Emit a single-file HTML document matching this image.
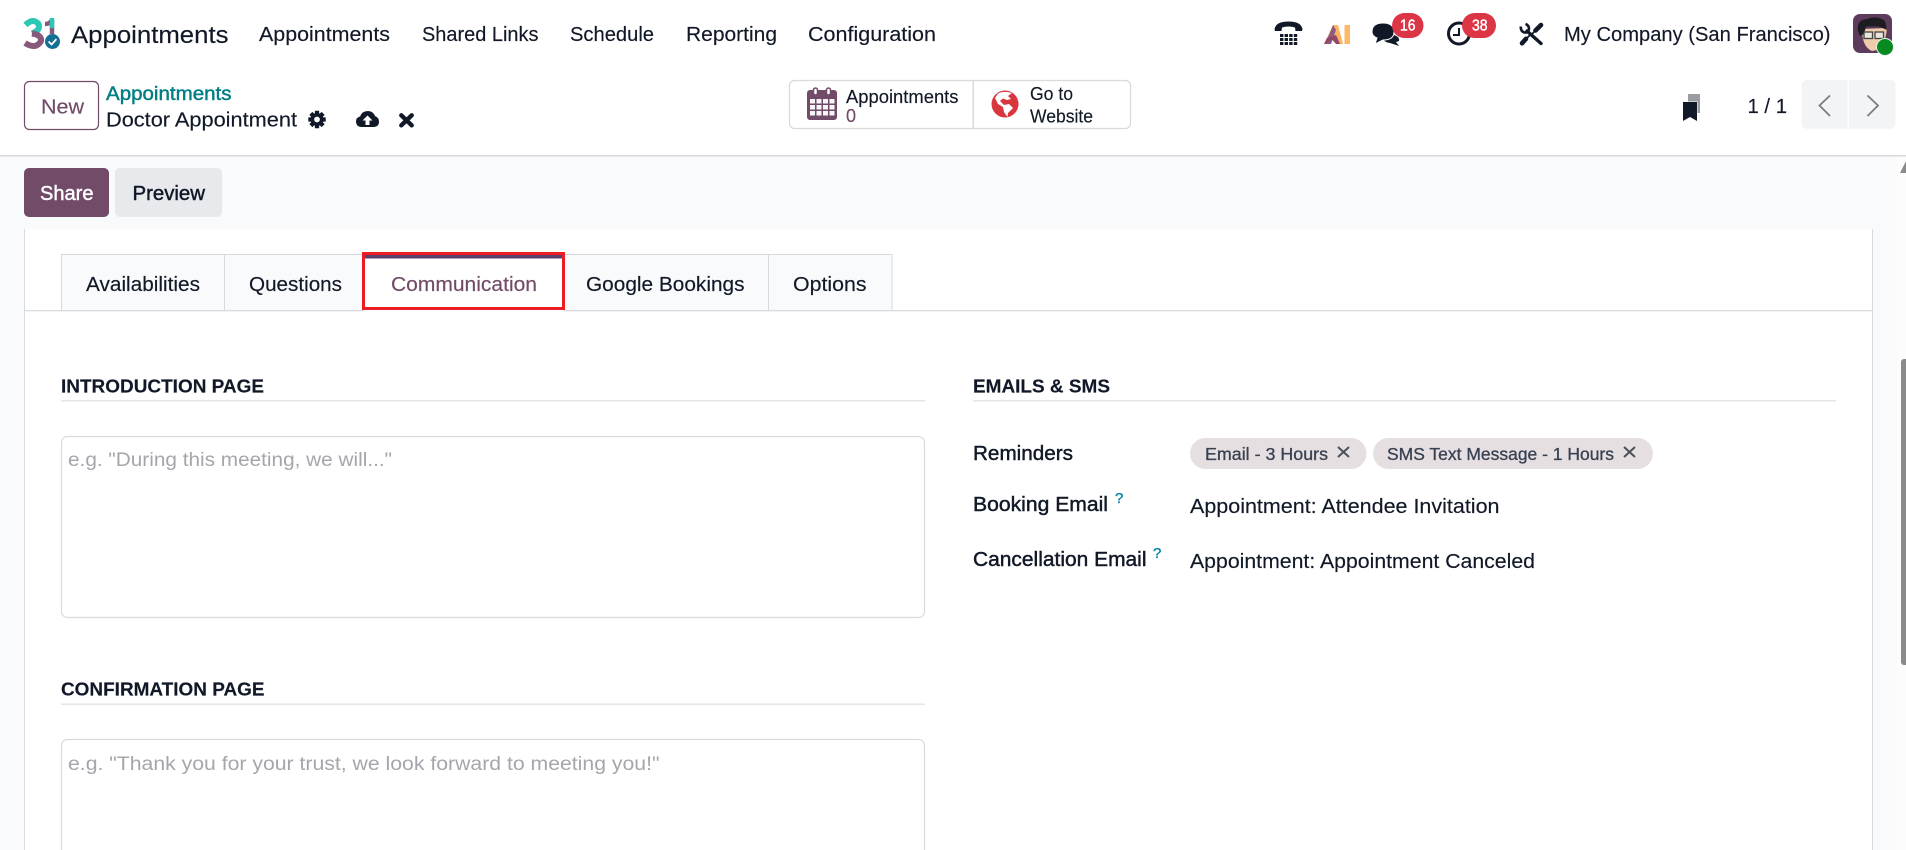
<!DOCTYPE html>
<html lang="en">
<head>
<meta charset="utf-8">
<title>Appointments - Doctor Appointment</title>
<style>
html,body{margin:0;padding:0;width:1906px;height:850px;overflow:hidden;background:#f9fafb}
svg{display:block;position:absolute;left:0;top:0;overflow:hidden}
text{font-family:"Liberation Sans",Arial,sans-serif;fill:#111827;white-space:pre;stroke:#111827;stroke-width:.15px}
.s{stroke:currentColor;stroke-width:.45px}
</style>
</head>
<body>
<svg width="1906" height="850" viewBox="0 0 1906 850" xmlns="http://www.w3.org/2000/svg">
<!-- backgrounds -->
<rect width="1906" height="850" fill="#f9fafb"/>
<rect x="0" y="0" width="1906" height="155" fill="#fff"/>
<rect x="0" y="155" width="1906" height="1.5" fill="#d8dadd"/>
<rect x="1897" y="157" width="9" height="693" fill="#fcfcfd"/>
<polygon points="1900,173 1906,161 1906,173" fill="#8a8a8a"/>
<path d="M1906 359H1904a3 3 0 0 0-3 3V662a3 3 0 0 0 3 3H1906Z" fill="#8a8a8a"/>

<!-- logo -->
<g fill="none" stroke-width="6">
<path d="M25.5 25Q33 17.5 38.5 24Q41 30 32 33.5" stroke="#2cc7b5"/>
<path d="M32 33.5Q42 35 41 41Q36 50 25 43" stroke="#875a7b"/>
<path d="M45 24Q50 24 52 20V34" stroke="#875a7b" stroke-width="4.5"/>
<path d="M52 18V28" stroke="#2cc7b5" stroke-width="4.5"/>
</g>
<circle cx="52.5" cy="41.5" r="7.5" fill="#136f96"/>
<path d="M48.6 41.5l3 3 4.8-5.4" fill="none" stroke="#fff" stroke-width="1.8"/>

<text x="71" y="43" font-size="24" textLength="157.5" lengthAdjust="spacingAndGlyphs">Appointments</text>
<g font-size="20">
<text x="259" y="41" textLength="131" lengthAdjust="spacingAndGlyphs">Appointments</text>
<text x="422" y="41" textLength="116.5" lengthAdjust="spacingAndGlyphs">Shared Links</text>
<text x="570" y="41" textLength="84" lengthAdjust="spacingAndGlyphs">Schedule</text>
<text x="686" y="41" textLength="91" lengthAdjust="spacingAndGlyphs">Reporting</text>
<text x="808" y="41" textLength="128" lengthAdjust="spacingAndGlyphs">Configuration</text>
<text x="1564" y="41" textLength="266.5" lengthAdjust="spacingAndGlyphs">My Company (San Francisco)</text>
</g>

<!-- phone -->
<path d="M1274.5 29Q1276 21.5 1288.5 21.5Q1301 21.5 1302.5 29L1302 31H1295.5L1295 27.5Q1288.5 25.5 1282 27.5L1281.5 31H1275Z" fill="#111827"/>
<g fill="#111827">
<rect x="1280" y="34" width="3.4" height="3"/><rect x="1284.6" y="34" width="3.4" height="3"/><rect x="1289.2" y="34" width="3.4" height="3"/><rect x="1293.8" y="34" width="3.4" height="3"/>
<rect x="1280" y="38" width="3.4" height="3"/><rect x="1284.6" y="38" width="3.4" height="3"/><rect x="1289.2" y="38" width="3.4" height="3"/><rect x="1293.8" y="38" width="3.4" height="3"/>
<rect x="1280" y="42" width="3.4" height="3"/><rect x="1284.6" y="42" width="3.4" height="3"/><rect x="1289.2" y="42" width="3.4" height="3"/><rect x="1293.8" y="42" width="3.4" height="3"/>
</g>
<!-- AI -->
<polygon points="1333,25 1338,25 1343,44 1337,44 1334,35 1330,44 1324,44" fill="#fdb45f"/>
<polygon points="1329,35 1333,25 1336,30 1331,44 1324,44" fill="#8c5a82"/>
<polygon points="1327,38 1336,35 1340,44 1336,44 1332,39.500 1326,44 1324,44" fill="#91476a"/>
<rect x="1344.5" y="25" width="5.5" height="19" fill="#fdb968"/>
<!-- chat -->
<path d="M1385 35H1394Q1400 37 1399 41L1396 42L1399 46L1390 43Q1381 42 1385 35Z" fill="#111827"/>
<path d="M1372 32Q1372 23 1383 23Q1394 23 1394 32Q1394 40 1383 40L1375 44L1377 38Q1372 36 1372 32Z" fill="#111827" stroke="#fff" stroke-width="1"/>
<rect x="1392" y="13" width="31.5" height="25" rx="12.5" fill="#dc3545"/>
<text x="1400" y="30.5" font-size="15.5" class="s" style="fill:#fff;color:#fff" textLength="15.5" lengthAdjust="spacingAndGlyphs">16</text>
<!-- clock -->
<circle cx="1459" cy="33.5" r="10.5" fill="none" stroke="#111827" stroke-width="3"/>
<path d="M1459 28V35H1453" fill="none" stroke="#111827" stroke-width="2"/>
<rect x="1462" y="13" width="34" height="25" rx="12.5" fill="#dc3545"/>
<text x="1472" y="30.5" font-size="15.5" class="s" style="fill:#fff;color:#fff" textLength="15.5" lengthAdjust="spacingAndGlyphs">38</text>
<!-- tools: wrench and screwdriver -->
<g stroke="#111827" fill="none">
<path d="M1527 31L1541 43.500" stroke-width="3.400" stroke-linecap="round"/>
<path d="M1520.800 26.500Q1520.500 31.500 1524.500 32.500Q1528.500 33 1529 28.500Q1528.800 25.200 1525.500 24" stroke-width="2.600"/>
<path d="M1535.500 30.500L1541 25" stroke-width="4.600" stroke-linecap="round"/>
<path d="M1532 34L1535 31" stroke-width="1.800"/>
<path d="M1522 43.300L1526 38.800" stroke-width="4.600" stroke-linecap="round"/>
<path d="M1526 39L1530.500 34.500" stroke-width="1.800"/>
</g>
<!-- avatar -->
<rect x="1853" y="14" width="39" height="39" rx="7" fill="#5d3b5c"/>
<path d="M1862 29Q1862 47 1872 51Q1885 50 1887 28Z" fill="#f0cba9"/>
<path d="M1858 31Q1856 20 1867 19Q1877 15 1885 21L1887 30L1879 26.500H1866L1864 34L1860 36Z" fill="#1d1c22"/>
<g fill="#e8e6df" stroke="#444" stroke-width="1.300"><rect x="1864" y="32" width="8.500" height="6.500"/><rect x="1875" y="32" width="8.500" height="6.500"/></g>
<circle cx="1885" cy="47" r="8.500" fill="#078a1f" stroke="#e9f4ee" stroke-width="1"/>

<!-- control panel -->
<rect x="24.500" y="81.500" width="74" height="48" rx="5" fill="#fff" stroke="#714b67" stroke-width="1.200"/>
<text x="41" y="113.500" font-size="20" style="fill:#714b67;stroke:#714b67" textLength="43" lengthAdjust="spacingAndGlyphs">New</text>
<text x="106" y="100" font-size="19" class="s" style="fill:#017e84;color:#017e84" textLength="125.500" lengthAdjust="spacingAndGlyphs">Appointments</text>
<text x="106" y="126.500" font-size="20.500" textLength="191" lengthAdjust="spacingAndGlyphs">Doctor Appointment</text>

<!-- gear -->
<g stroke="#111827" stroke-width="4.300">
<path d="M317 110.800V128.200M308.300 119.500H325.700M310.850 113.350L323.150 125.650M323.150 113.350L310.850 125.650"/>
</g>
<circle cx="317" cy="119.500" r="6.500" fill="#111827"/><circle cx="317" cy="119.500" r="2.900" fill="#fff"/>
<!-- cloud -->
<path d="M361 127Q356 126.500 356 121.500Q356 117.500 360 116.500Q362 111 368 111Q373 111 375 116Q379 117.500 379 122Q379 126.500 374 127Z" fill="#111827"/>
<path d="M367.500 115.500L372.500 120.500H369.500V125H365.500V120.500H362.500Z" fill="#fff"/>
<!-- x -->
<path d="M401.300 115.300L411.700 125.300M411.700 115.300L401.300 125.300" stroke="#111827" stroke-width="4.400" stroke-linecap="round"/>

<!-- stat buttons -->
<rect x="789.500" y="80.500" width="341" height="48" rx="5" fill="#fff" stroke="#d8dadd" stroke-width="1.300"/>
<rect x="972.500" y="81" width="1.500" height="47" fill="#d8dadd"/>
<rect x="807" y="90" width="30" height="30" rx="3" fill="#714b67"/>
<g fill="#fff" opacity=".95">
<rect x="810" y="99" width="5" height="4.500"/><rect x="816.500" y="99" width="5" height="4.500"/><rect x="823" y="99" width="5" height="4.500"/><rect x="829.500" y="99" width="5" height="4.500"/>
<rect x="810" y="105" width="5" height="4.500"/><rect x="816.500" y="105" width="5" height="4.500"/><rect x="823" y="105" width="5" height="4.500"/><rect x="829.500" y="105" width="5" height="4.500"/>
<rect x="810" y="111" width="5" height="4.500"/><rect x="816.500" y="111" width="5" height="4.500"/><rect x="823" y="111" width="5" height="4.500"/><rect x="829.500" y="111" width="5" height="4.500"/>
</g>
<g fill="#fff" stroke="#714b67" stroke-width="1.500"><rect x="813.500" y="88" width="4" height="7" rx="2"/><rect x="826.500" y="88" width="4" height="7" rx="2"/></g>
<text x="846" y="103" font-size="18" textLength="112.500" lengthAdjust="spacingAndGlyphs">Appointments</text>
<text x="846" y="122" font-size="18" style="fill:#714b67;stroke:#714b67">0</text>
<circle cx="1005" cy="104" r="13.500" fill="#d9363e"/>
<path d="M998 93.500Q1004 90.500 1012 93L1008 96L1011 99L1007 100L1003 98.500L1000 101L1004 105L1009 104L1013 108L1008 113L1007.500 117L1004 112L1003 107L998 104L995 98Z" fill="#fff"/>
<text x="1030" y="100" font-size="18" textLength="43" lengthAdjust="spacingAndGlyphs">Go to</text>
<text x="1030" y="122.500" font-size="18" textLength="63" lengthAdjust="spacingAndGlyphs">Website</text>

<!-- pager -->
<rect x="1688" y="94" width="12" height="19" fill="#9a9ca0"/>
<path d="M1683 102H1697V121L1690 117L1683 121Z" fill="#111827" stroke="#fff" stroke-width="1" paint-order="stroke"/>
<text x="1747.500" y="113" font-size="20" textLength="39.500" lengthAdjust="spacingAndGlyphs">1 / 1</text>
<path d="M1801.600 85a5 5 0 0 1 5-5H1847.500V128.700H1806.600a5 5 0 0 1-5-5Z" fill="#f3f4f6"/>
<path d="M1849 80H1890.500a5 5 0 0 1 5 5V123.700a5 5 0 0 1-5 5H1849Z" fill="#f3f4f6"/>
<path d="M1830 95.500L1819.500 105.500L1830 116" fill="none" stroke="#797c82" stroke-width="1.800"/>
<path d="M1867.500 95.500L1878 105.500L1867.500 116" fill="none" stroke="#797c82" stroke-width="1.800"/>

<!-- action buttons -->
<rect x="24" y="168" width="85" height="49" rx="5" fill="#714b67"/>
<text x="40" y="200" font-size="20" class="s" style="fill:#fff;color:#fff" textLength="53.500" lengthAdjust="spacingAndGlyphs">Share</text>
<rect x="115" y="168" width="107" height="49" rx="5" fill="#e7e9ed"/>
<text x="132.500" y="200" font-size="20" class="s" style="color:#111827" textLength="72.500" lengthAdjust="spacingAndGlyphs">Preview</text>

<!-- sheet -->
<rect x="24" y="229" width="1848.500" height="621" fill="#fff"/>
<rect x="24" y="229" width="1" height="621" fill="#d8dadd"/>
<rect x="1872" y="229" width="1" height="621" fill="#d8dadd"/>

<!-- tabs -->
<rect x="25" y="310" width="1847" height="1.300" fill="#d8dadd"/>
<g fill="#f9fafb" stroke="#d8dadd" stroke-width="1">
<rect x="61.500" y="254.500" width="163" height="56"/>
<rect x="224.500" y="254.500" width="139" height="56"/>
<rect x="564.500" y="254.500" width="204" height="56"/>
<rect x="768.500" y="254.500" width="123.500" height="56"/>
</g>
<rect x="364" y="254" width="200" height="58" fill="#fff"/>
<rect x="365" y="255" width="198" height="3.500" fill="#5c3d6e"/>
<rect x="363.500" y="253.500" width="200" height="55" fill="none" stroke="#ed1c24" stroke-width="3"/>
<g font-size="20">
<text x="86" y="291" textLength="114" lengthAdjust="spacingAndGlyphs">Availabilities</text>
<text x="249" y="291" textLength="93" lengthAdjust="spacingAndGlyphs">Questions</text>
<text x="391" y="291" style="fill:#714b67;stroke:#714b67" textLength="146" lengthAdjust="spacingAndGlyphs">Communication</text>
<text x="586" y="291" textLength="158.500" lengthAdjust="spacingAndGlyphs">Google Bookings</text>
<text x="793" y="291" textLength="73.500" lengthAdjust="spacingAndGlyphs">Options</text>
</g>

<!-- left column -->
<text x="61" y="392.500" font-size="18" font-weight="700" textLength="203" lengthAdjust="spacingAndGlyphs">INTRODUCTION PAGE</text>
<rect x="61" y="400" width="864" height="1.500" fill="#e3e5e8"/>
<rect x="61.500" y="436.500" width="863" height="181" rx="6" fill="#fff" stroke="#d8dadd" stroke-width="1.200"/>
<text x="68" y="466" font-size="19" style="fill:#a4a6ab;stroke:none" textLength="324" lengthAdjust="spacingAndGlyphs">e.g. &quot;During this meeting, we will...&quot;</text>

<text x="61" y="695.500" font-size="18" font-weight="700" textLength="203.500" lengthAdjust="spacingAndGlyphs">CONFIRMATION PAGE</text>
<rect x="61" y="703.500" width="864" height="1.500" fill="#e3e5e8"/>
<path d="M61.500 850V745.500a6 6 0 0 1 6-6H918.500a6 6 0 0 1 6 6V850" fill="#fff" stroke="#d8dadd" stroke-width="1.200"/>
<text x="68" y="770" font-size="19" style="fill:#a4a6ab;stroke:none" textLength="591.500" lengthAdjust="spacingAndGlyphs">e.g. &quot;Thank you for your trust, we look forward to meeting you!&quot;</text>

<!-- right column -->
<text x="973" y="392.500" font-size="18" font-weight="700" textLength="137" lengthAdjust="spacingAndGlyphs">EMAILS &amp; SMS</text>
<rect x="973" y="400" width="863" height="1.500" fill="#e3e5e8"/>

<text x="973" y="460" font-size="20" class="s" style="color:#111827" textLength="100" lengthAdjust="spacingAndGlyphs">Reminders</text>
<rect x="1190" y="438" width="176.500" height="31" rx="15.500" fill="#e6dfe1"/>
<text x="1205" y="460" font-size="17.500" style="fill:#374151;stroke:#374151;stroke-width:.3px" textLength="123" lengthAdjust="spacingAndGlyphs">Email - 3 Hours</text>
<path d="M1338 447L1349 457M1349 447L1338 457" stroke="#4b5058" stroke-width="2"/>
<rect x="1373" y="438" width="280" height="31" rx="15.500" fill="#e6dfe1"/>
<text x="1387" y="460" font-size="17.500" style="fill:#374151;stroke:#374151;stroke-width:.3px" textLength="227" lengthAdjust="spacingAndGlyphs">SMS Text Message - 1 Hours</text>
<path d="M1624 447L1635 457M1635 447L1624 457" stroke="#4b5058" stroke-width="2"/>

<text x="973" y="511" font-size="20" class="s" style="color:#111827" textLength="135" lengthAdjust="spacingAndGlyphs">Booking Email</text>
<text x="1115" y="503" font-size="15" style="fill:#0180a5;stroke:#0180a5;stroke-width:.3px">?</text>
<text x="1190" y="513" font-size="20" textLength="309.500" lengthAdjust="spacingAndGlyphs">Appointment: Attendee Invitation</text>

<text x="973" y="566" font-size="20" class="s" style="color:#111827" textLength="173.500" lengthAdjust="spacingAndGlyphs">Cancellation Email</text>
<text x="1153" y="558" font-size="15" style="fill:#0180a5;stroke:#0180a5;stroke-width:.3px">?</text>
<text x="1190" y="568" font-size="20" textLength="345" lengthAdjust="spacingAndGlyphs">Appointment: Appointment Canceled</text>
</svg>
</body>
</html>
